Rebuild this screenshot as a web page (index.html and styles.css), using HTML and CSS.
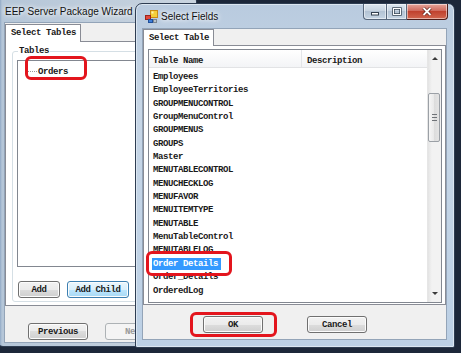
FILE: index.html
```html
<!DOCTYPE html>
<html lang="en">
<head>
    <meta charset="UTF-8">
    <meta name="viewport" content="width=device-width, initial-scale=1.0">
    <title>Select Fields</title>
    <link rel="stylesheet" href="styles.css">
</head>
<body>
<div class="desktop">
    <!-- background window -->
    <div class="window wizard">
        <div class="titlebar"><span class="title">EEP Server Package Wizard</span></div>
        <div class="client">
            <div class="tabs"><div class="tab">Select Tables</div></div>
            <div class="tab-page">
                <fieldset class="group">
                    <legend>Tables</legend>
                    <div class="tree">
                        <div class="tree-item"><span class="branch"></span>Orders<span class="mark mark-orders"></span></div>
                    </div>
                    <div class="btn-row">
                        <button class="btn btn-add">Add</button>
                        <button class="btn btn-child focus">Add Child</button>
                    </div>
                </fieldset>
            </div>
            <div class="footer">
                <button class="btn">Previous</button>
                <button class="btn" disabled>Next</button>
            </div>
        </div>
    </div>

    <!-- dialog on top -->
    <div class="window dialog">
        <div class="titlebar">
            <svg class="app-icon" width="13" height="13" viewBox="0 0 13 13">
                <rect x="5.5" y="0.5" width="7" height="7" fill="#f4cf3a" stroke="#c98a14"/>
                <rect x="6.5" y="1.5" width="2" height="2" fill="#fff6b8"/>
                <rect x="0.5" y="5.5" width="5" height="4" fill="#e0473c" stroke="#9c241c"/>
                <rect x="3.5" y="9.5" width="4" height="3" fill="#3f7fd8" stroke="#1f4f9a"/>
                <rect x="8.5" y="9.5" width="3" height="3" fill="#b9c3cc" stroke="#7c8791"/>
            </svg>
            <span class="title">Select Fields</span>
            <div class="caption-btns">
                <span class="cap cap-min">
                    <svg width="10" height="8" viewBox="0 0 10 8"><rect x="1.5" y="4.5" width="7" height="2.5" fill="#fff" stroke="#33404f"/></svg>
                </span>
                <span class="cap cap-max">
                    <svg width="10" height="9" viewBox="0 0 10 9"><rect x="1.5" y="1.5" width="7" height="6" fill="none" stroke="#33404f" stroke-width="2.4"/><rect x="1.5" y="1.5" width="7" height="6" fill="none" stroke="#fff" stroke-width="1"/></svg>
                </span>
                <span class="cap cap-close">
                    <svg width="10" height="9" viewBox="0 0 10 9"><path d="M1.5 1 L8.5 8 M8.5 1 L1.5 8" stroke="#5a1a14" stroke-width="3.2"/><path d="M1.5 1 L8.5 8 M8.5 1 L1.5 8" stroke="#fff" stroke-width="1.8"/></svg>
                </span>
            </div>
        </div>
        <div class="client">
            <div class="tabs"><div class="tab">Select Table</div></div>
            <div class="tab-page">
                <div class="listview">
                    <div class="list-main">
                        <div class="list-head">
                            <div class="col col-name">Table Name</div>
                            <div class="col col-desc">Description</div>
                        </div>
                        <div class="rows">
                            <div class="row">Employees</div>
                            <div class="row">EmployeeTerritories</div>
                            <div class="row">GROUPMENUCONTROL</div>
                            <div class="row">GroupMenuControl</div>
                            <div class="row">GROUPMENUS</div>
                            <div class="row">GROUPS</div>
                            <div class="row">Master</div>
                            <div class="row">MENUTABLECONTROL</div>
                            <div class="row">MENUCHECKLOG</div>
                            <div class="row">MENUFAVOR</div>
                            <div class="row">MENUITEMTYPE</div>
                            <div class="row">MENUTABLE</div>
                            <div class="row">MenuTableControl</div>
                            <div class="row">MENUTABLELOG</div>
                            <div class="row picked"><span class="sel">Order Details</span><span class="mark mark-row"></span></div>
                            <div class="row">Order_Details</div>
                            <div class="row">OrderedLog</div>
                        </div>
                    </div>
                    <div class="scrollbar">
                        <div class="sb-btn"><span class="arrow-up"></span></div>
                        <div class="sb-track"><div class="sb-thumb"><span class="grip"></span></div></div>
                        <div class="sb-btn"><span class="arrow-down"></span></div>
                    </div>
                </div>
            </div>
            <div class="dialog-buttons">
                <span class="ok-wrap"><button class="btn">OK</button><span class="mark mark-ok"></span></span>
                <button class="btn">Cancel</button>
            </div>
        </div>
    </div>
</div>
</body>
</html>
```

FILE: styles.css
```css
* {
    box-sizing: border-box;
}
html, body {
    margin: 0;
}
body {
    width: 461px;
    height: 353px;
    overflow: hidden;
    background-color: #1c2739;
    font-family: "Liberation Mono", "DejaVu Sans Mono", monospace;
    font-size: 9px;
    font-weight: bold;
    letter-spacing: -0.4px;
    color: #1a1a1a;
}
.desktop {
    position: relative;
    width: 461px;
    height: 353px;
}

/* windows */
.window {
    position: absolute;
    display: flex;
    flex-direction: column;
    border: 1px solid #2e3d52;
}
.titlebar {
    display: flex;
    align-items: center;
    flex-shrink: 0;
}
.title {
    font-family: "Liberation Sans", Arial, sans-serif;
    font-size: 10px;
    font-weight: normal;
    letter-spacing: 0;
    color: #111;
    text-shadow: 0 0 4px #fff, 0 0 6px #fff;
    white-space: nowrap;
}
.client {
    background-color: #f0f0f0;
    border: 1px solid #93a4b8;
    display: flex;
    flex-direction: column;
    flex-shrink: 0;
}

.wizard {
    left: -3px;
    top: -5px;
    width: 200px;
    height: 352px;
    padding: 0 3px 3px 6px;
    border-radius: 6px;
    background: linear-gradient(to right, #6d8db4, #b5c6d8 4px, #c9d4df);
}
.wizard .titlebar {
    height: 26px;
    padding: 5px 0 0 1px;
}
.wizard .client {
    height: 321px;
}

.dialog {
    left: 135px;
    top: 3px;
    width: 320px;
    height: 345px;
    padding: 0 7px 7px 6px;
    border-radius: 7px 7px 2px 2px;
    background: linear-gradient(#b9cbdf, #c7d6e6 30%, #bcd0e5);
    box-shadow: inset 0 0 0 1px #dbe6f1;
}
.dialog .titlebar {
    height: 24px;
}
.app-icon {
    margin: 0 3px 0 3px;
}
.caption-btns {
    display: flex;
    margin-left: auto;
    margin-right: -1px;
    align-self: flex-start;
    margin-top: 0;
}
.cap {
    height: 16px;
    display: flex;
    align-items: center;
    justify-content: center;
    border: 1px solid #57677b;
    border-top: none;
    background: linear-gradient(#dde6ef, #c5d2df 50%, #b3c3d4 50%, #c6d5e4);
    box-shadow: inset 0 0 0 1px rgba(255, 255, 255, 0.5);
}
.cap-min {
    width: 23px;
    border-radius: 0 0 0 4px;
    border-right: none;
}
.cap-max {
    width: 21px;
}
.cap-close {
    width: 41px;
    border-left: none;
    border-radius: 0 0 4px 0;
    border-color: #4e1d19;
    background: linear-gradient(#e6a59b, #d06a5d 45%, #c0422f 50%, #d1664f);
}
.dialog .client {
    height: 312px;
}

/* tabs */
.tabs {
    display: flex;
    flex-shrink: 0;
}
.tab {
    position: relative;
    background-color: #fff;
    border: 1px solid #898c95;
    border-bottom: none;
    margin-bottom: -1px;
    white-space: nowrap;
}
.wizard .tabs {
    margin-top: 1px;
}
.wizard .tab {
    width: 76px;
    height: 18px;
    padding: 3px 0 0 5px;
}
.dialog .tab {
    width: 71px;
    height: 17px;
    padding: 3px 0 0 5px;
}
.tab-page {
    background-color: #fff;
    border: 1px solid #898c95;
    flex-shrink: 0;
}
.wizard .tab-page {
    height: 265px;
    width: 300px;
    padding: 4px 0 0 6px;
}
.dialog .tab-page {
    height: 260px;
    padding: 3px 3px 1px 4px;
}

/* wizard content */
.group {
    margin: 0;
    padding: 0 4px 3px 4px;
    border: 1px solid #d5dfe5;
    border-radius: 3px;
}
.group legend {
    padding: 0 1px;
    margin-left: 1px;
    line-height: 11px;
}
.tree {
    margin-top: 3px;
    height: 207px;
    border: 1px solid #828790;
    background-color: #fff;
    padding: 5px 0 0 10px;
}
.tree-item {
    position: relative;
    line-height: 13px;
    white-space: nowrap;
}
.branch {
    display: inline-block;
    width: 9px;
    border-top: 1px dotted #9a9a9a;
    vertical-align: middle;
    margin-right: 1px;
}
.btn-row {
    display: flex;
    gap: 7px;
    margin-top: 14px;
    padding-left: 1px;
}
.footer {
    display: flex;
    gap: 17px;
    margin-top: 17px;
    padding-left: 23px;
}

/* buttons */
.btn {
    height: 17px;
    width: 60px;
    padding: 0;
    font: inherit;
    letter-spacing: inherit;
    color: #1a1a1a;
    border: 1px solid #707070;
    border-radius: 3px;
    background: linear-gradient(#f2f2f2, #ebebeb 50%, #dddddd 50%, #cfcfcf);
    box-shadow: inset 0 0 0 1px #fcfcfc;
}
.btn-add {
    width: 42px;
}
.btn-child {
    width: 62px;
}
.btn.focus {
    border-color: #3c7fb1;
    background: linear-gradient(#eaf6fd, #d9f0fc 50%, #bee6fd 50%, #a7d9f5);
}
.btn:disabled {
    border-color: #adb2b5;
    background: #f4f4f4;
    color: #9a9a9a;
    box-shadow: none;
}

/* list view */
.listview {
    display: flex;
    height: 254px;
    border: 1px solid #828790;
    background-color: #fff;
}
.list-main {
    flex: 1;
}
.list-head {
    display: flex;
    height: 18px;
    border-bottom: 1px solid #e2e3e5;
    background: linear-gradient(#ffffff, #f3f4f6);
}
.col {
    padding: 6px 0 0 4px;
    white-space: nowrap;
}
.col-name {
    width: 153px;
    border-right: 1px solid #e3e5e8;
}
.col-desc {
    padding-left: 5px;
}
.rows {
    padding-top: 3px;
}
.row {
    height: 13.35px;
    line-height: 13.35px;
    padding-left: 4px;
    white-space: nowrap;
}
.row.picked {
    position: relative;
}
.sel {
    background-color: #3399ff;
    color: #fff;
    padding: 1px 3px 1px 1px;
    margin-left: -1px;
}

.scrollbar {
    width: 14px;
    display: flex;
    flex-direction: column;
    background: linear-gradient(to right, #e3e3e3, #f2f2f2 30%, #f2f2f2);
    border-left: 1px solid #e6e6e6;
}
.sb-btn {
    height: 17px;
    display: flex;
    align-items: center;
    justify-content: center;
}
.arrow-up {
    width: 0;
    height: 0;
    border-left: 3px solid transparent;
    border-right: 3px solid transparent;
    border-bottom: 3px solid #3a3a3a;
}
.arrow-down {
    width: 0;
    height: 0;
    border-left: 3px solid transparent;
    border-right: 3px solid transparent;
    border-top: 3px solid #3a3a3a;
}
.sb-track {
    flex: 1;
}
.sb-thumb {
    margin: 26px 1px 0 0;
    height: 49px;
    border: 1px solid #9ba0a6;
    border-radius: 2px;
    background: linear-gradient(to right, #f6f6f6, #e9e9e9 50%, #dcdcdc 50%, #e4e4e4);
    display: flex;
    align-items: center;
    justify-content: center;
}
.grip {
    width: 5px;
    height: 7px;
    border-top: 1px solid #6f7378;
    border-bottom: 1px solid #6f7378;
    background: linear-gradient(#6f7378, #6f7378) center / 5px 1px no-repeat;
}

.dialog-buttons {
    display: flex;
    gap: 44px;
    margin-top: 11px;
    padding-left: 60px;
}
.ok-wrap {
    position: relative;
    display: inline-block;
}

/* red annotation boxes drawn over the screenshot */
.mark {
    position: absolute;
    border: 3px solid #e3151d;
    border-radius: 6px;
    pointer-events: none;
}
.mark-orders {
    left: -3px;
    top: -10px;
    width: 62px;
    height: 24px;
}
.mark-row {
    left: -3px;
    top: -6.5px;
    width: 86px;
    height: 25px;
}
.mark-ok {
    left: -13px;
    top: -4px;
    width: 87px;
    height: 25px;
}
```
